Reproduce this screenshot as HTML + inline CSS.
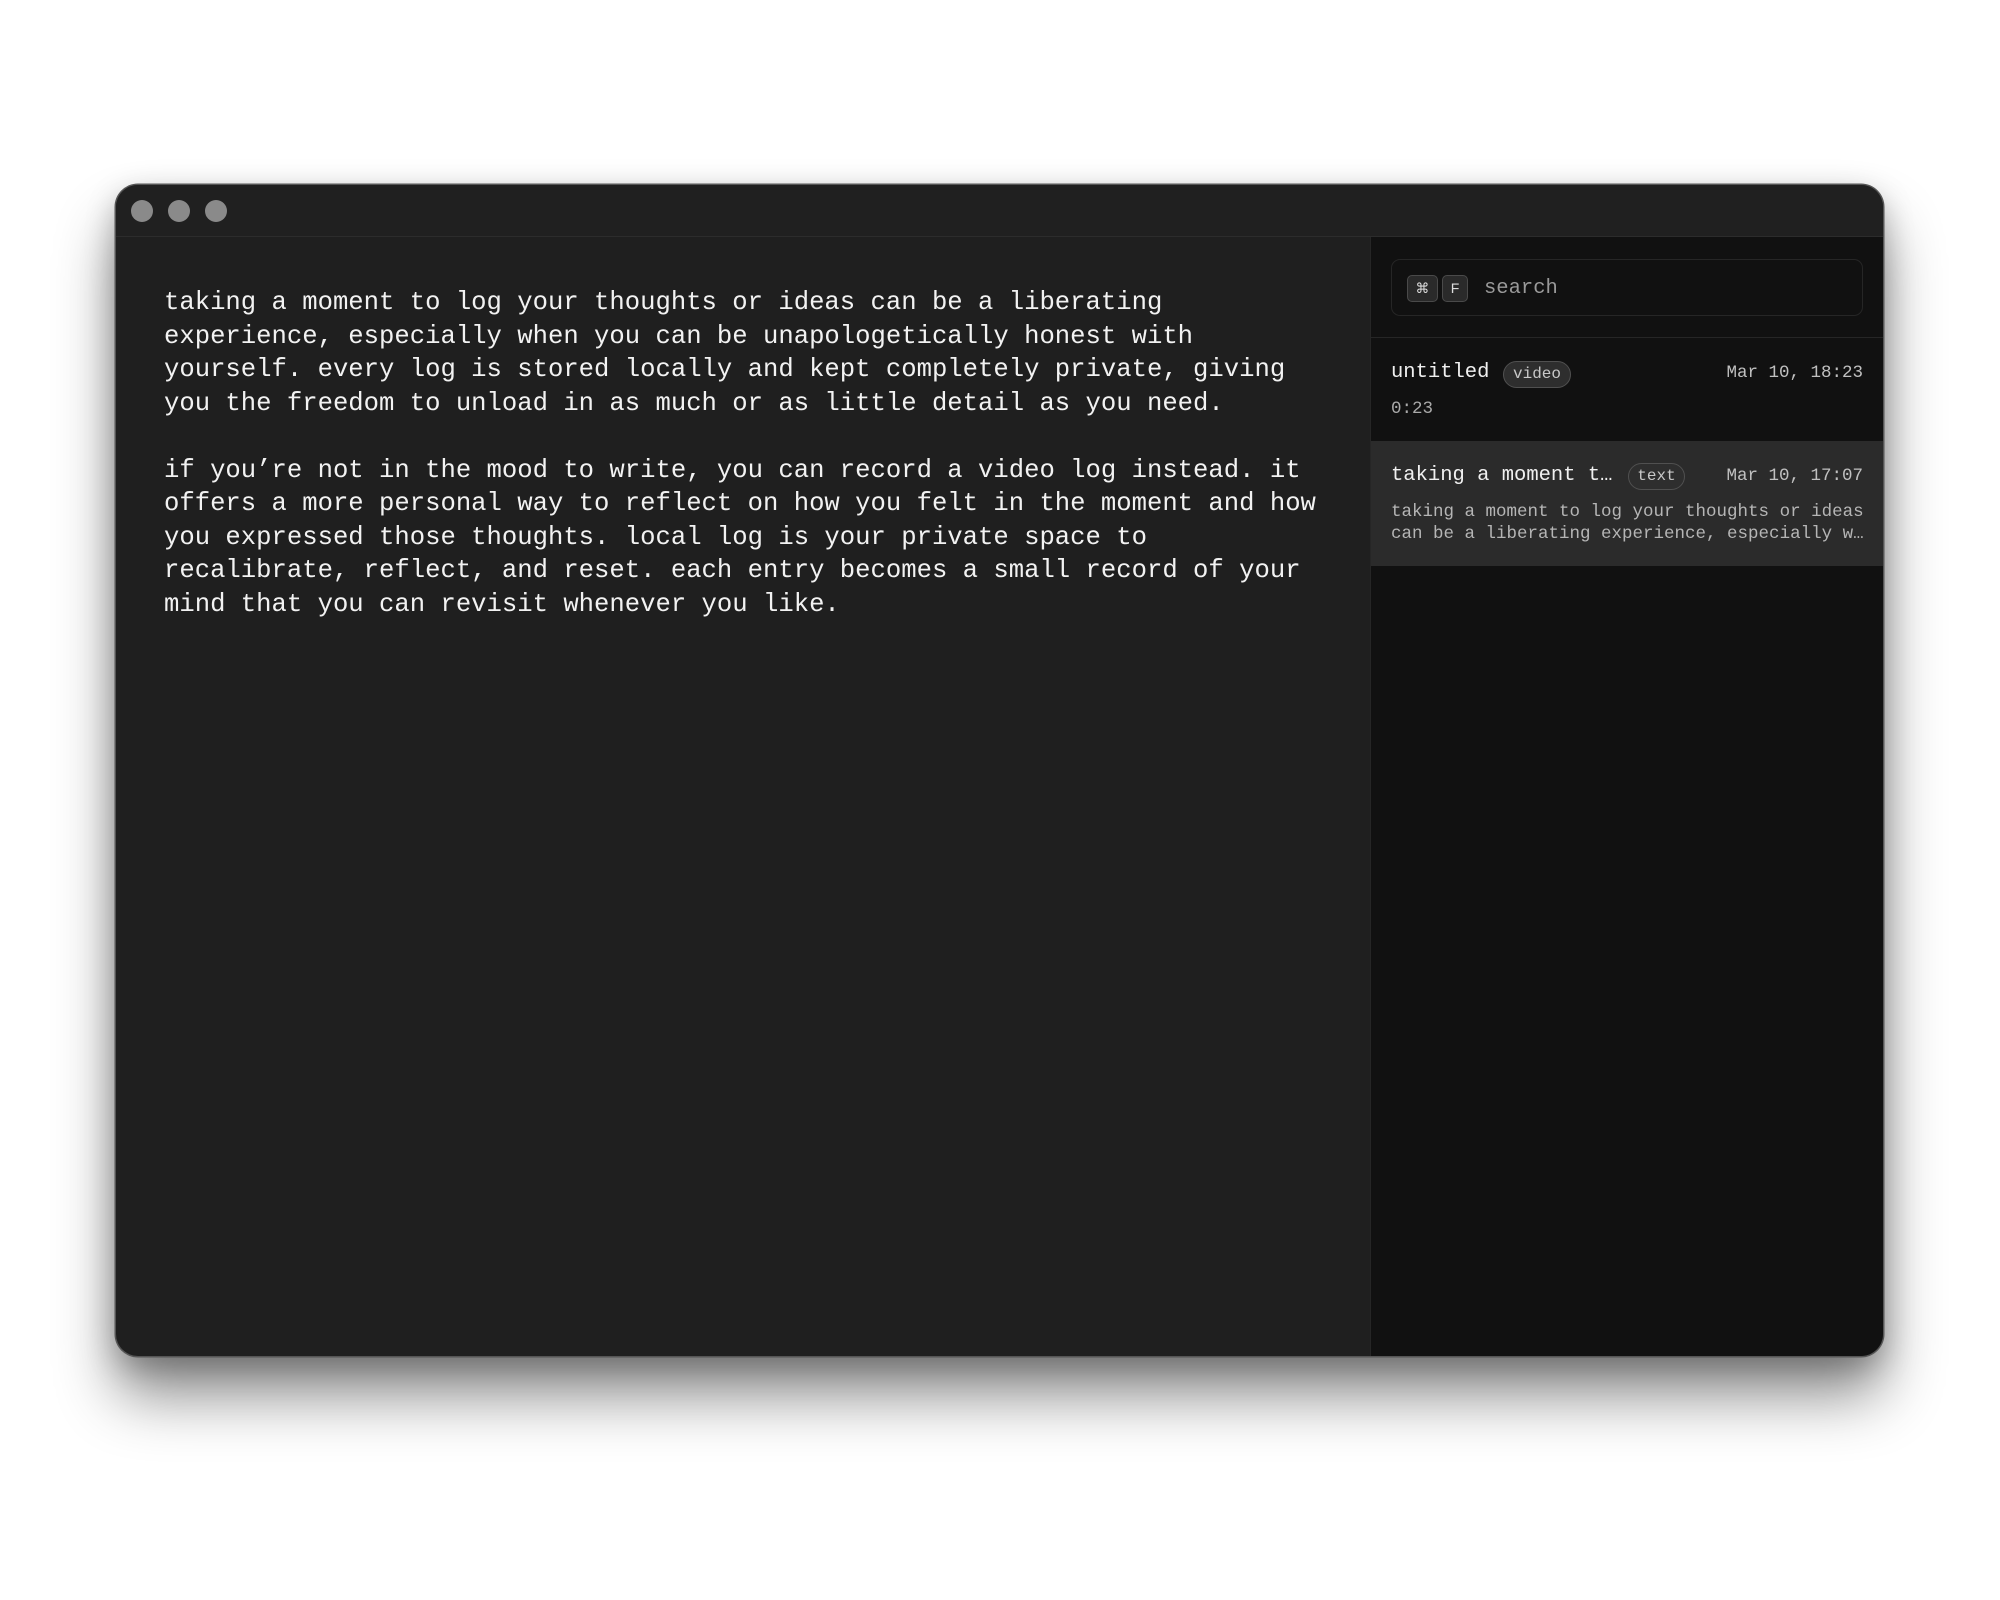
<!DOCTYPE html>
<html><head><meta charset="utf-8"><style>
html,body{margin:0;padding:0;background:#fff;width:2000px;height:1600px;overflow:hidden}
.win{position:absolute;left:116px;top:185px;width:1767px;height:1171px;border-radius:22px;background:#1f1f1f;overflow:hidden;box-shadow:0 0 0 1.5px #555,0 40px 60px rgba(0,0,0,.45),0 10px 30px rgba(0,0,0,.25)}
.tb{position:absolute;left:0;top:0;right:0;height:51px;background:#202020;border-bottom:1px solid #2c2c2c}
.dot{position:absolute;top:15px;width:22px;height:22px;border-radius:50%;background:#8a8a8a}
.main{position:absolute;left:48px;top:101px;font-family:"Liberation Mono",monospace;font-size:25.6px;line-height:33.5px;color:#f2f2f2;white-space:pre}
.side{position:absolute;left:1254px;top:52px;right:0;bottom:0;background:#111;border-left:1px solid #262626}
.search{position:absolute;left:20px;top:22px;width:472px;height:57px;border:1px solid #262626;border-radius:9px;box-sizing:border-box}
.key{position:absolute;top:15px;height:27px;border:1px solid #4a4a4a;background:#2a2a2a;border-radius:5px;box-sizing:border-box;color:#ddd;font:14px "Liberation Sans","DejaVu Sans",sans-serif;text-align:center;line-height:25px}
.mono{font-family:"Liberation Mono",monospace}
.stxt{position:absolute;left:92px;top:14px;font-size:20.5px;line-height:30px;color:#999}
.div{position:absolute;left:0;right:0;top:100px;height:1px;background:#262626}
.t{position:absolute;font-size:20.5px;color:#f0f0f0;line-height:28px}
.badge{position:absolute;height:27px;box-sizing:border-box;border:1.5px solid #505050;background:#2e2e2e;border-radius:14px;color:#c8c8c8;font-size:16px;line-height:24px;text-align:center}
.date{position:absolute;right:20px;font-size:17.5px;color:#c0c0c0;line-height:24px}
.sub{position:absolute;left:20px;font-size:17.5px;color:#b5b5b5;line-height:22px;white-space:pre}
.hl{position:absolute;left:0;right:0;top:204px;height:125px;background:#2b2b2b}
</style></head><body>
<div class="win">
<div class="tb"><div class="dot" style="left:15px"></div><div class="dot" style="left:52px"></div><div class="dot" style="left:89px"></div></div>
<div class="main">taking a moment to log your thoughts or ideas can be a liberating
experience, especially when you can be unapologetically honest with
yourself. every log is stored locally and kept completely private, giving
you the freedom to unload in as much or as little detail as you need.

if you’re not in the mood to write, you can record a video log instead. it
offers a more personal way to reflect on how you felt in the moment and how
you expressed those thoughts. local log is your private space to
recalibrate, reflect, and reset. each entry becomes a small record of your
mind that you can revisit whenever you like.</div>
<div class="side mono">
<div class="search"><div class="key" style="left:15px;width:31px">⌘</div><div class="key" style="left:50px;width:26px">F</div><div class="stxt">search</div></div>
<div class="div"></div>
<div class="t" style="left:20px;top:122px">untitled</div>
<div class="badge" style="left:132px;top:124px;width:68px">video</div>
<div class="date" style="top:124px">Mar 10, 18:23</div>
<div class="sub" style="top:161px;color:#aaa">0:23</div>
<div class="hl"></div>
<div class="t" style="left:20px;top:225px">taking a moment t…</div>
<div class="badge" style="left:257px;top:226px;width:57px">text</div>
<div class="date" style="top:227px">Mar 10, 17:07</div>
<div class="sub" style="top:264px">taking a moment to log your thoughts or ideas
can be a liberating experience, especially w…</div>
</div>
</div>
</body></html>
